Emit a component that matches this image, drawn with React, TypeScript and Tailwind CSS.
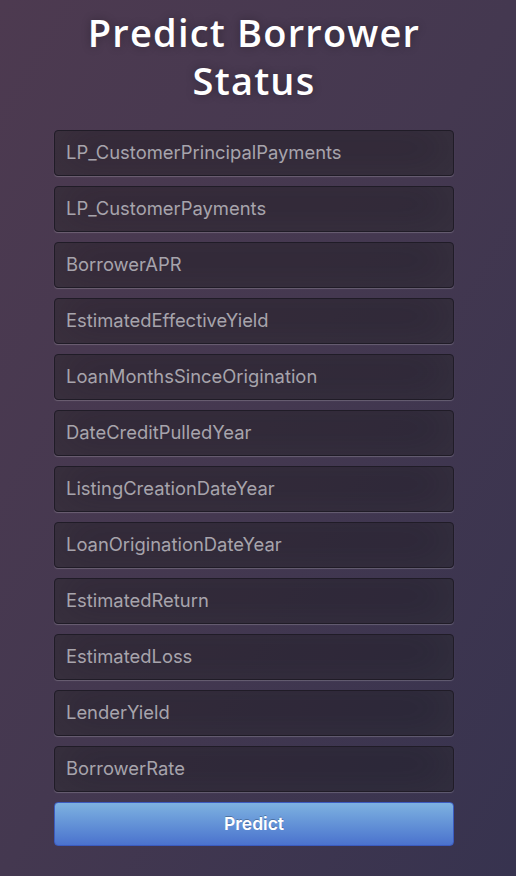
const fields = [
  "LP_CustomerPrincipalPayments",
  "LP_CustomerPayments",
  "BorrowerAPR",
  "EstimatedEffectiveYield",
  "LoanMonthsSinceOrigination",
  "DateCreditPulledYear",
  "ListingCreationDateYear",
  "LoanOriginationDateYear",
  "EstimatedReturn",
  "EstimatedLoss",
  "LenderYield",
  "BorrowerRate",
];

const App = () => {
  return (
    <div className="min-h-[876px] w-full bg-gradient-to-br from-[#4d3a50] via-[#443850] to-[#37334f]">
      <div className="ml-[54px] w-[400px] pt-[8px]">
        <h1 className="text-center font-['Open_Sans',sans-serif] text-[38px] font-semibold leading-[48px] tracking-[1.2px] text-white [text-shadow:0_0_10px_rgba(0,0,0,0.3)]">
          Predict Borrower Status
        </h1>
        <form className="mt-[26px] flex flex-col gap-[10px]">
          {fields.map((f) => (
            <input
              key={f}
              type="text"
              placeholder={f}
              className="h-[46px] w-full rounded-[4px] border border-[#201c27] bg-[rgba(0,0,0,0.3)] px-[11px] pb-[2px] font-['Inter',sans-serif] text-[18.4px] text-white shadow-[inset_0_-5px_45px_rgba(100,100,100,0.2),0_1px_1px_rgba(255,255,255,0.2)] outline-none placeholder:text-[#a7a4ac]"
            />
          ))}
          <button
            type="button"
            className="h-[44px] w-full rounded-[4px] border border-[#3b5bbf] bg-gradient-to-b from-[#7eb2e0] to-[#4b72cd] font-['Inter',sans-serif] text-[17.5px] font-semibold text-white [text-shadow:0_-1px_0_rgba(0,0,0,0.25)]"
          >
            Predict
          </button>
        </form>
      </div>
    </div>
  );
};

export default App;
